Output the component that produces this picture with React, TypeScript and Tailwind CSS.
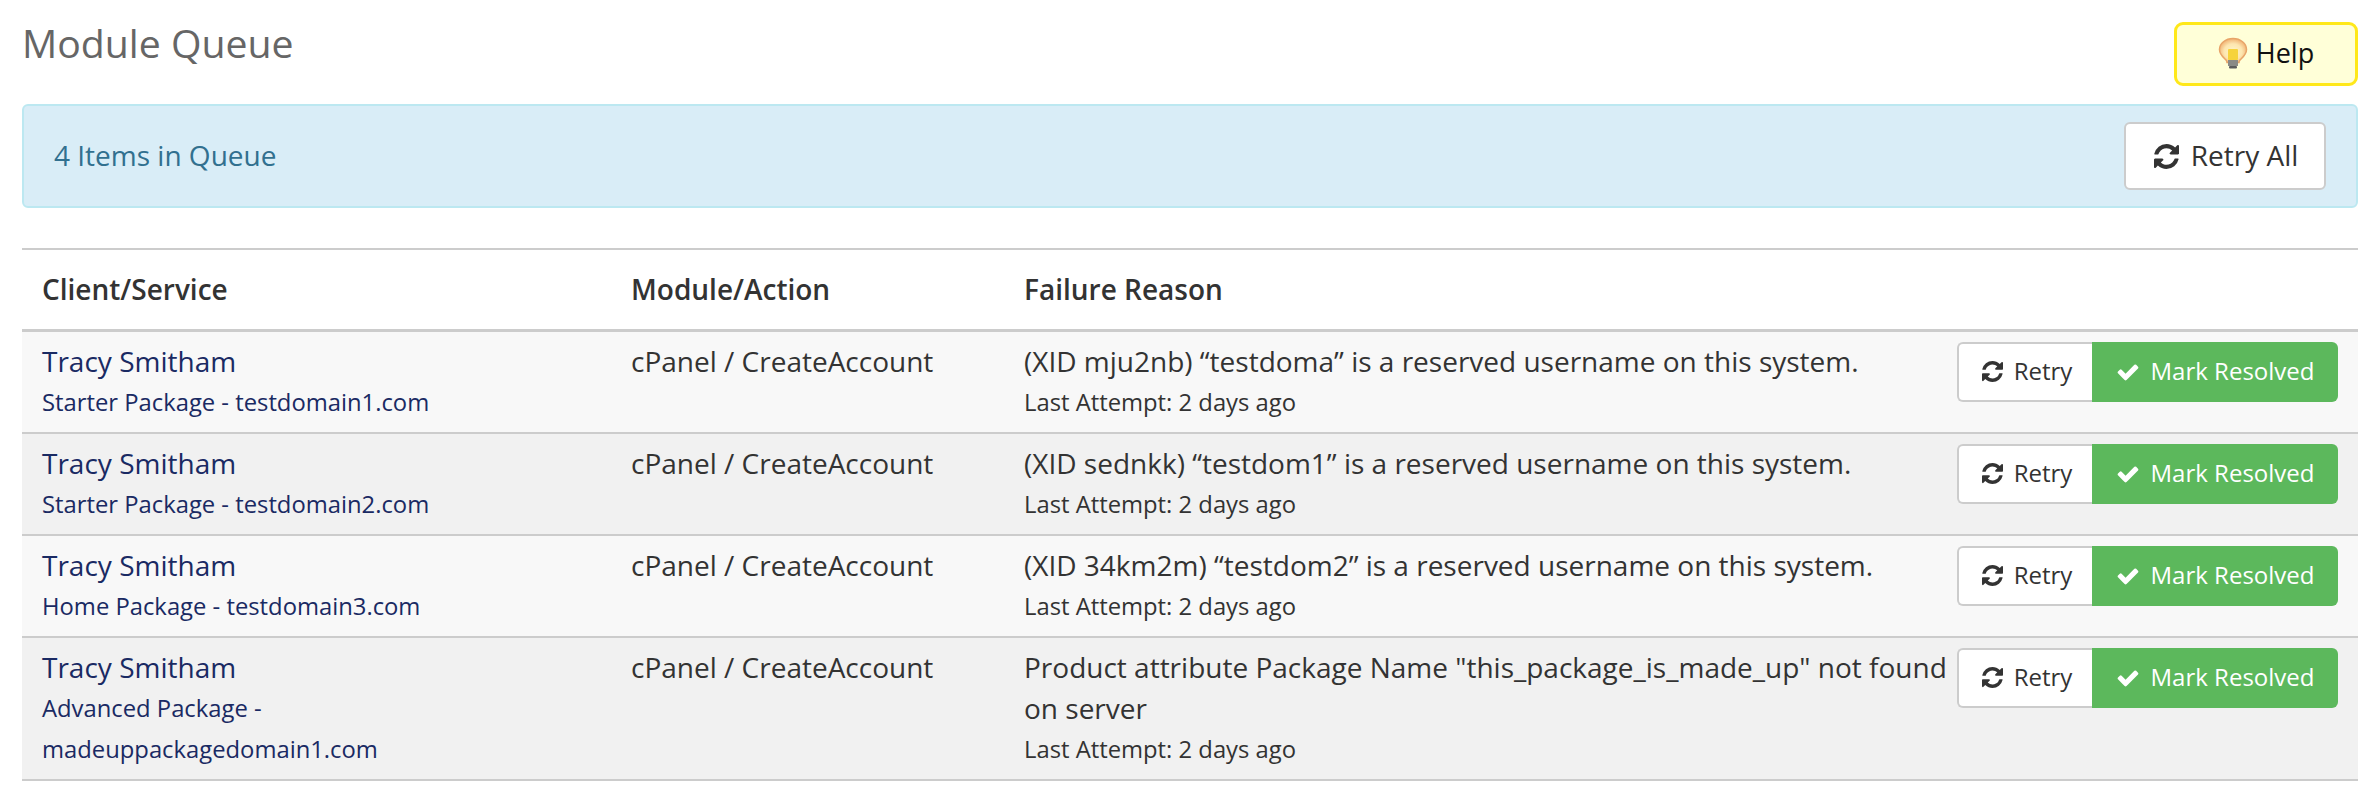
import React from "react";

const Sync = ({ className }: { className: string }) => (
  <svg viewBox="0 0 1536 1536" className={className} fill="currentColor">
    <path d="M1511 928q0 5-1 7-64 268-268 434.5t-478 166.5q-146 0-282.5-55t-243.5-157l-129 129q-19 19-45 19t-45-19-19-45v-448q0-26 19-45t45-19h448q26 0 45 19t19 45-19 45l-137 137q71 66 161 102t187 36q134 0 250-65t186-179q11-17 53-117 8-23 30-23h192q13 0 22.5 9.5t9.5 22.5zm25-800v448q0 26-19 45t-45 19h-448q-26 0-45-19t-19-45 19-45l138-138q-148-137-349-137-134 0-250 65t-186 179q-11 17-53 117-8 23-30 23h-199q-13 0-22.5-9.5t-9.5-22.5v-7q65-268 270-434.5t480-166.5q146 0 284 55.5t245 156.5l130-129q19-19 45-19t45 19 19 45z" />
  </svg>
);

const Check = ({ className }: { className: string }) => (
  <svg viewBox="0 0 1792 1792" className={className} fill="currentColor">
    <path d="M1671 566q0 40-28 68l-724 724-136 136q-28 28-68 28t-68-28l-136-136-362-362q-28-28-28-68t28-68l136-136q28-28 68-28t68 28l294 295 656-657q28-28 68-28t68 28l136 136q28 28 28 68z" />
  </svg>
);

const Bulb = () => (
  <svg viewBox="0 0 30 32" className="w-[30px] h-[32px] shrink-0">
    <defs>
      <radialGradient id="bulbGlow" cx="50%" cy="55%" r="55%">
        <stop offset="0%" stopColor="#fff6c8" />
        <stop offset="60%" stopColor="#fde6b0" />
        <stop offset="100%" stopColor="#f0b070" />
      </radialGradient>
    </defs>
    <path d="M15 1.5C7.5 1.5 1.5 6.5 1.5 12.5c0 5 3.5 7.5 6.5 10.5 .7 .8 1 1.5 1 2.5h12c0-1 .3-1.7 1-2.5 3-3 6.5-5.5 6.5-10.5C28.500 6.500 22.500 1.500 15 1.500z" fill="url(#bulbGlow)" stroke="#e8a468" strokeWidth="1.5" />
    <rect x="10" y="12" width="10" height="11" rx="1" fill="#f6d33c" />
    <rect x="10" y="23" width="10" height="6" fill="#8a8a86" />
    <rect x="11" y="29" width="8" height="2.500" rx="1" fill="#5c5c5c" />
  </svg>
);

const rows = [
  { service: "Starter Package - testdomain1.com", reason: "(XID mju2nb) “testdoma” is a reserved username on this system." },
  { service: "Starter Package - testdomain2.com", reason: "(XID sednkk) “testdom1” is a reserved username on this system." },
  { service: "Home Package - testdomain3.com", reason: "(XID 34km2m) “testdom2” is a reserved username on this system." },
  { service: "Advanced Package - madeuppackagedomain1.com", reason: 'Product attribute Package Name "this_package_is_made_up" not found on server' },
];

export default function App() {
  return (
    <div className="bg-white pl-[22px] pr-[20px] min-h-[796px] text-[#333] [font-family:'Open_Sans',sans-serif] text-[28px] leading-[41px]">
      <div className="flex justify-between items-start pt-[22px] h-[104px]">
        <h1 className="text-[39.2px] leading-[44px] text-[#666] font-normal -mt-[1px]">Module Queue</h1>
        <button className="flex items-center justify-center w-[184px] h-[64px] rounded-[9px] border-[3px] border-[#ffe81a] bg-[#ffffd8] text-[#111] text-[27px] leading-[36px] pb-[2px] gap-[8px]">
          <Bulb />
          Help
        </button>
      </div>

      <div className="flex items-center justify-between h-[104px] rounded-[6px] border-2 border-[#bce8f1] bg-[#d9edf7] pl-[30px] pr-[30px] text-[#31708f]">
        <span className="pb-[2px]">4 Items in Queue</span>
        <button className="flex items-center justify-center gap-[12px] w-[202px] h-[68px] rounded-[6px] border-[2px] border-[#ccc] bg-white text-[#333] text-[28px] pb-[2px] pl-[2px]">
          <Sync className="w-[25px] h-[25px] mt-[2px]" />
          Retry All
        </button>
      </div>

      <table className="w-full mt-[40px] table-fixed border-collapse border-t-2 border-[#ccc]">
        <colgroup>
          <col className="w-[589px]" />
          <col className="w-[393px]" />
          <col />
        </colgroup>
        <thead>
          <tr className="border-b-[3px] border-[#ccc]">
            <th className="h-[81px] pl-[20px] text-left font-semibold">Client/Service</th>
            <th className="pl-[20px] text-left font-semibold">Module/Action</th>
            <th className="pl-[20px] text-left font-semibold">Failure Reason</th>
          </tr>
        </thead>
        <tbody>
          {rows.map((r, i) => (
            <tr key={i} className={`border-b-2 border-[#ccc] align-top ${i % 2 === 0 ? "bg-[#f8f8f8]" : "bg-[#f1f1f1]"}`}>
              <td className="pl-[20px] pr-[20px] pt-[9px] pb-[9px] text-[#1a2a63]">
                <div>Tracy Smitham</div>
                <div className="text-[23.8px]">{r.service}</div>
              </td>
              <td className="pl-[20px] pt-[9px] pb-[9px]">cPanel / CreateAccount</td>
              <td className="pl-[20px] pt-[9px] pb-[9px]">
                <div className="flex justify-between">
                  <div className="w-[930px]">
                    <div>{r.reason}</div>
                    <div className="text-[23.8px]">Last Attempt: 2 days ago</div>
                  </div>
                  <div className="flex mt-[1px] mr-[20px] h-[60px] shrink-0 text-[24px]">
                    <button className="flex items-center justify-center gap-[11px] w-[135px] rounded-l-[6px] border-2 border-r-0 border-[#ccc] bg-white text-[#333] pb-[2px] pl-[3px]">
                      <Sync className="w-[21px] h-[21px] mt-[2px]" />
                      Retry
                    </button>
                    <button className="flex items-center justify-center gap-[11px] w-[246px] rounded-r-[6px] bg-[#5cb85c] text-white pb-[2px]">
                      <Check className="w-[24px] h-[24px] mt-[2px]" />
                      Mark Resolved
                    </button>
                  </div>
                </div>
              </td>
            </tr>
          ))}
        </tbody>
      </table>
    </div>
  );
}
